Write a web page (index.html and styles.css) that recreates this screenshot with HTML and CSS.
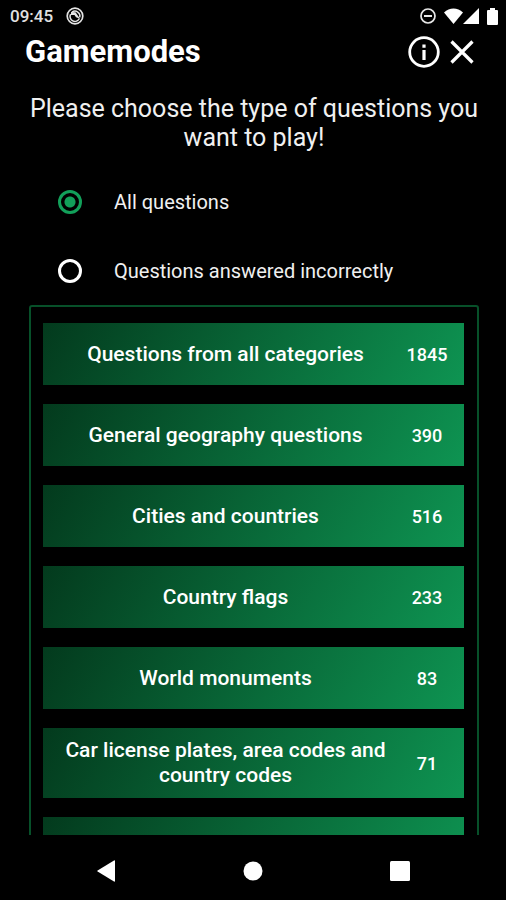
FILE: index.html
```html
<!DOCTYPE html>
<html lang="en">
<head>
<meta charset="utf-8">
<meta name="viewport" content="width=device-width, initial-scale=1">
<title>Gamemodes</title>
<link rel="stylesheet" href="styles.css">
</head>
<body>
<div class="status">
  <div class="status-group">
    <span>09:45</span>
    <svg width="18" height="18" viewBox="0 0 18 18" fill="none" stroke="#e4e4e4">
      <circle cx="9" cy="9" r="7.8" stroke-width="1.7"/>
      <path d="M4.600 7.200a4.900 4.900 0 1 0 8.800 4.300M13.700 10.400A4.900 4.900 0 0 0 6 5.200" stroke-width="1.500"/>
      <path d="M5 5l4.500 .3 4.500 6.500-4-1.500-1.500-2.300L5 8z" fill="#e4e4e4" stroke="none"/>
    </svg>
  </div>
  <div class="status-group status-icons">
    <svg width="16" height="16" viewBox="0 0 16 16" fill="none" stroke="#e8e8e8">
      <circle cx="8" cy="8" r="7" stroke-width="1.700"/>
      <path d="M4 8h8" stroke-width="2"/>
    </svg>
    <svg class="wifi" width="19" height="16" viewBox="0 0 19 16" fill="#fff"><path d="M0 4.500C5.500-1 13.500-1 19 4.500L9.500 16z"/></svg>
    <svg class="signal" width="16" height="16" viewBox="0 0 16 16" fill="#fff"><path d="M16 0v16H0z"/></svg>
    <svg width="11" height="17" viewBox="0 0 11 17" fill="#fff"><path d="M3 0h5v2h2q1 0 1 1v13q0 1-1 1H1q-1 0-1-1V3q0-1 1-1h2z"/></svg>
  </div>
</div>

<header class="header">
  <h1>Gamemodes</h1>
  <button class="icon-button" type="button" aria-label="Info">
    <svg width="32" height="32" viewBox="0 0 32 32" fill="none" stroke="#fff">
      <circle cx="16" cy="16" r="14.300" stroke-width="2.800"/>
      <path d="M16 14v10M16 8.500v3.200" stroke-width="3.200"/>
    </svg>
  </button>
  <button class="icon-button" type="button" aria-label="Close">
    <svg width="24" height="24" viewBox="0 0 24 24" fill="none" stroke="#fff" stroke-width="3.200"><path d="M1.500 1.500l21 21M22.500 1.500l-21 21"/></svg>
  </button>
</header>

<main class="main">
  <p class="intro">Please choose the type of questions you want to play!</p>
  <div class="options">
    <label class="option"><input type="radio" name="scope" checked>All questions</label>
    <label class="option"><input type="radio" name="scope">Questions answered incorrectly</label>
  </div>
  <div class="modes">
    <button class="mode" type="button"><span>Questions from all categories</span><span class="count">1845</span></button>
    <button class="mode" type="button"><span>General geography questions</span><span class="count">390</span></button>
    <button class="mode" type="button"><span>Cities and countries</span><span class="count">516</span></button>
    <button class="mode" type="button"><span>Country flags</span><span class="count">233</span></button>
    <button class="mode" type="button"><span>World monuments</span><span class="count">83</span></button>
    <button class="mode" type="button"><span>Car license plates, area codes and country codes</span><span class="count">71</span></button>
    <button class="mode" type="button"></button>
  </div>
</main>

<nav class="nav">
  <button type="button" aria-label="Back"><svg width="18" height="22" viewBox="0 0 18 22" fill="#fff"><path d="M17 0.500q1-.5 1 .5v20q0 1-1 .5L.6 11.500q-.8-.5 0-1z"/></svg></button>
  <button type="button" aria-label="Home"><svg width="20" height="20" viewBox="0 0 20 20" fill="#fff"><circle cx="10" cy="10" r="9.500"/></svg></button>
  <button type="button" aria-label="Recent apps"><svg width="20" height="20" viewBox="0 0 20 20" fill="#fff"><rect width="20" height="20" rx="1.500"/></svg></button>
</nav>
</body>
</html>
```
FILE: styles.css
```css
* {
  box-sizing: border-box;
}

body {
  margin: 0;
  height: 100vh;
  display: flex;
  flex-direction: column;
  overflow: hidden;
  background: #000;
  color: #f0f0f0;
  font-family: Roboto, "Liberation Sans", sans-serif;
}

button {
  border: 0;
  padding: 0;
  background: none;
  color: inherit;
  font: inherit;
}

svg {
  display: block;
}

.status {
  flex: none;
  height: 32px;
  padding: 0 8px 0 10px;
  display: flex;
  align-items: center;
  justify-content: space-between;
  font-size: 17px;
  font-weight: 500;
  color: #e0e0e0;
}

.status-group {
  display: flex;
  align-items: center;
  gap: 13px;
}

.status-icons {
  gap: 8px;
}

.wifi {
  margin-right: -8px;
}

.header {
  flex: none;
  height: 40px;
  padding: 0 32px 0 25px;
  display: flex;
  align-items: center;
  gap: 10px;
}

.header h1 {
  flex: 1;
  margin: 0;
  font-size: 31px;
  line-height: 40px;
  font-weight: 700;
  color: #fff;
}

.main {
  flex: 1;
  min-height: 0;
  overflow: hidden;
  padding: 22px 27px 0 29px;
}

.intro {
  margin: 0;
  font-size: 25px;
  line-height: 29px;
  text-align: center;
}

.options {
  padding: 15px 29px 0;
}

.option {
  height: 69px;
  display: flex;
  align-items: center;
  gap: 32px;
  font-size: 20px;
}

.option input {
  appearance: none;
  flex: none;
  width: 24px;
  height: 24px;
  margin: 0;
  border: 3px solid #fff;
  border-radius: 50%;
}

.option input:checked {
  border-color: #12a05a;
  background: radial-gradient(circle, #12a05a 5px, transparent 6px);
}

.modes {
  display: flex;
  flex-direction: column;
  gap: 19px;
  padding: 16px 13px 15px 12px;
  border: 2px solid #075029;
  border-radius: 3px;
}

.mode {
  min-height: 62px;
  padding: 10px 0 10px 18px;
  display: grid;
  grid-template-columns: 1fr 74px;
  align-items: center;
  background: linear-gradient(120deg, #033a1d, #0e9452);
  color: #fff;
  font-size: 21px;
  line-height: 25px;
  font-weight: 500;
  text-align: center;
}

.count {
  font-size: 18px;
}

.nav {
  flex: none;
  height: 65px;
  padding: 6px 33px 0;
  display: flex;
}

.nav button {
  flex: 1;
  display: flex;
  align-items: center;
  justify-content: center;
}
```
